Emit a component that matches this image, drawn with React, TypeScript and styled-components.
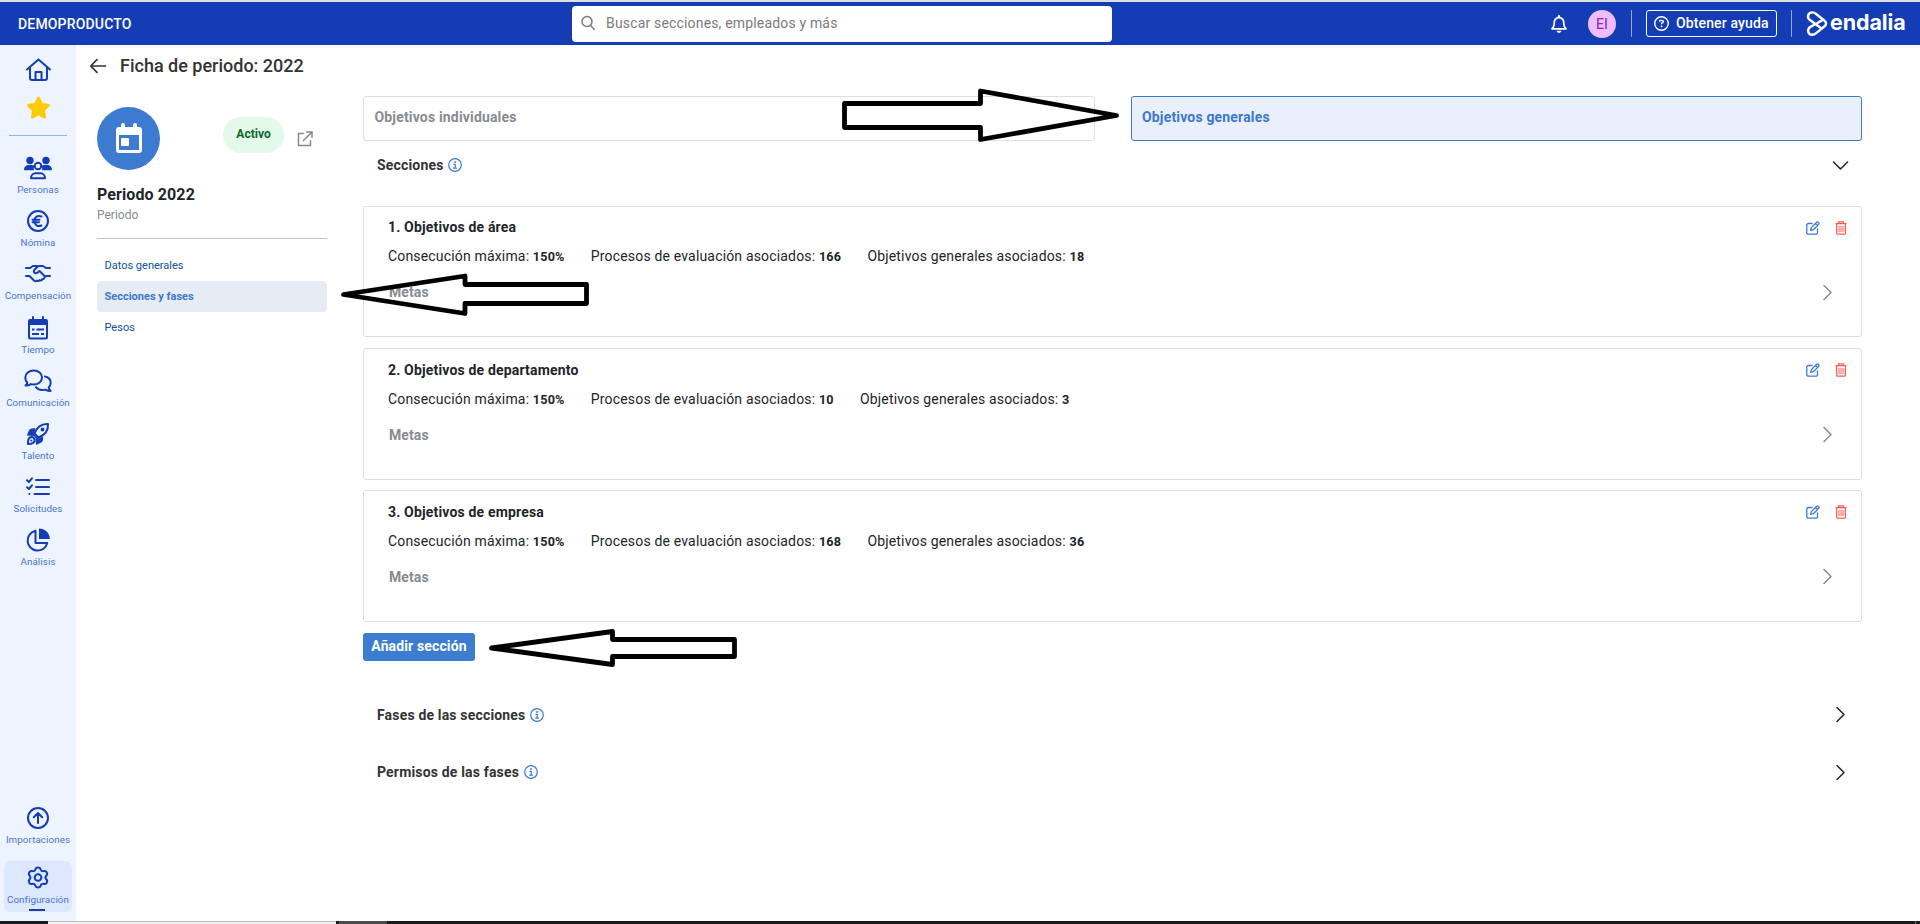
import React from 'react';
import styled, { createGlobalStyle, css } from 'styled-components';
import { FaStar, FaRegBell, FaRegCircleQuestion } from 'react-icons/fa6';

const Global = createGlobalStyle`
  * { box-sizing: border-box; }
  html, body { margin: 0; padding: 0; background: #fff; }
  body { font-family: Roboto, "Open Sans", sans-serif; color: #212529; overflow: hidden; letter-spacing: 0.17px; }
  svg { display: block; flex: none; overflow: visible; }
`;

const Screen = styled.div`
  position: relative;
  width: 1920px;
  height: 924px;
  display: flex;
  flex-direction: column;
  overflow: hidden;
`;

const Header = styled.header`
  height: 45px;
  flex: none;
  display: flex;
  align-items: center;
  background: #143db5;
  border-top: 2px solid #dfdfe3;
  color: #fff;
`;

const Company = styled.div`
  width: 572px;
  padding-left: 18px;
  font-size: 14px;
  font-weight: 500;
`;

const SearchBox = styled.label`
  width: 540px;
  height: 36px;
  margin-top: 1px;
  display: flex;
  align-items: center;
  gap: 11px;
  padding: 0 9px 2px;
  border-radius: 4px;
  background: #fff;
  color: #7b7b7b;
  font-size: 14px;
`;

const HeaderTools = styled.div`
  flex: 1;
  height: 100%;
  display: flex;
  justify-content: flex-end;
  align-items: center;
  padding-right: 12px;
`;

const Avatar = styled.div`
  width: 28px;
  height: 28px;
  margin: 1px 15px 0 20px;
  border-radius: 50%;
  background: #efbdfd;
  color: #8a25b0;
  font-size: 14px;
  display: flex;
  align-items: center;
  justify-content: center;
  padding-bottom: 1px;
`;

const HeaderRule = styled.div`
  width: 1px;
  height: 27px;
  background: #8fa7e3;
`;

const HelpButton = styled.button`
  width: 131px;
  height: 27px;
  margin: 0 14px;
  padding: 0 0 1px 7px;
  display: flex;
  align-items: center;
  gap: 7px;
  border: 1px solid #fff;
  border-radius: 3px;
  background: transparent;
  color: #fff;
  font: 500 14px Roboto, sans-serif;
  letter-spacing: 0.13px;
  white-space: nowrap;
`;

const Brand = styled.div`
  display: flex;
  align-items: center;
  gap: 3px;
  margin-left: 14px;
  width: 102px;
`;

const BrandName = styled.span`
  margin-top: -4px;
  font: 700 21.5px/26px Inter, sans-serif;
  letter-spacing: -0.1px;
`;

const Body = styled.div`
  flex: 1;
  min-height: 0;
  display: flex;
`;

const Rail = styled.nav`
  width: 76px;
  flex: none;
  background: #edf4ff;
  color: #143db5;
  display: flex;
  flex-direction: column;
  align-items: center;
  padding: 13px 0 9px;
`;

const StarSlot = styled.div`
  flex: none;
  margin-top: 13px;
  color: #ffcb05;
`;

const RailRule = styled.div`
  width: 58px;
  height: 1px;
  flex: none;
  margin: 15px 0 16px;
  background: #8db3f5;
`;

const RailItem = styled.a<{ $active?: boolean }>`
  position: relative;
  width: 68px;
  height: 53.2px;
  flex: none;
  display: flex;
  flex-direction: column;
  align-items: center;
  padding-top: 4px;
  gap: 3px;
  color: #143db5;
  ${({ $active }) => $active && css`
    height: 51px;
    padding-top: 5px;
    border-radius: 7px;
    background: #dce8fe;
    &::after {
      content: '';
      position: absolute;
      left: 25px;
      bottom: 1px;
      width: 16px;
      height: 2px;
      background: #143db5;
    }
  `}
`;

const RailLabel = styled.span`
  color: #4b74c9;
  font-size: 9.8px;
  line-height: 13px;
  letter-spacing: 0.08px;
  white-space: nowrap;
`;

const RailGap = styled.div`
  height: 6px;
  flex: none;
`;

const Spacer = styled.div`
  flex: 1;
`;

const Page = styled.main`
  flex: 1;
  display: flex;
  flex-direction: column;
  background: #fff;
`;

const TitleRow = styled.div`
  height: 51px;
  display: flex;
  align-items: flex-start;
  gap: 13px;
  padding: 12px 0 0 13px;
  color: #333;
`;

const Title = styled.h1`
  margin: -3px 0 0;
  font-size: 18px;
  line-height: 24px;
  font-weight: 500;
  letter-spacing: 0;
`;

const Columns = styled.div`
  display: flex;
`;

const Profile = styled.aside`
  width: 251px;
  padding: 11px 0 0 21px;
`;

const ProfileTop = styled.div`
  display: flex;
  align-items: flex-start;
`;

const PeriodBadge = styled.div`
  width: 63px;
  height: 63px;
  border-radius: 50%;
  background: #3c7bcf;
  color: #fff;
  display: flex;
  align-items: center;
  justify-content: center;
`;

const Status = styled.span`
  width: 61px;
  height: 36px;
  margin: 10px 13px 0 63px;
  padding-top: 10px;
  border-radius: 18px;
  background: #e3f9ea;
  color: #08692a;
  font-size: 12px;
  line-height: 15px;
  font-weight: 700;
  letter-spacing: 0;
  text-align: center;
`;

const OpenIcon = styled.span`
  margin-top: 24px;
  color: #858b90;
`;

const PeriodName = styled.h2`
  margin: 14px 0 0;
  font-size: 16px;
  line-height: 21px;
  font-weight: 700;
  letter-spacing: 0.1px;
`;

const PeriodKind = styled.div`
  margin-top: 3px;
  height: 31px;
  border-bottom: 1px solid #bdbfc1;
  color: #858b90;
  font-size: 12px;
  line-height: 14px;
  letter-spacing: 0;
`;

const SideMenu = styled.div`
  display: flex;
  flex-direction: column;
  padding-top: 11px;
`;

const SideLink = styled.a<{ $active?: boolean }>`
  height: 31px;
  padding: 0 7.500px 1px;
  display: flex;
  align-items: center;
  border-radius: 4px;
  font-size: 11px;
  letter-spacing: 0;
  font-weight: ${p => (p.$active ? 700 : 400)};
  color: ${p => (p.$active ? '#3f77cb' : '#10519b')};
  background: ${p => (p.$active ? '#e5ecf4' : 'transparent')};
`;

const Content = styled.section`
  width: 1499px;
  margin-left: 36px;
`;

const Tabs = styled.div`
  display: flex;
  gap: 36px;
`;

const Tab = styled.div<{ $active?: boolean }>`
  flex: 1;
  height: 45px;
  padding: 0 10.5px 3px;
  display: flex;
  align-items: center;
  border: 1px solid ${p => (p.$active ? '#3c78cb' : '#dedfe1')};
  border-radius: 3px;
  background: ${p => (p.$active ? '#e9f0fb' : '#fff')};
  color: ${p => (p.$active ? '#3c78cb' : '#858c91')};
  font-size: 14px;
  font-weight: 700;
`;

const Accordion = styled.div<{ $height: number }>`
  height: ${p => p.$height}px;
  display: flex;
  align-items: center;
  gap: 4.5px;
  padding: 0 13px 0 14px;
  color: #333;
  font-size: 14px;
  font-weight: 700;
  > :last-child { margin-left: auto; color: #222; }
`;

const InfoMark = styled.span`
  color: #3c7bcf;
`;

const Cards = styled.div`
  display: flex;
  flex-direction: column;
  gap: 10.8px;
  margin-top: 17px;
`;

const Card = styled.article`
  height: 131.4px;
  padding: 11.4px 20px 0 24px;
  border: 1px solid #dedfe1;
  border-radius: 3px;
`;

const CardHead = styled.div`
  display: flex;
  align-items: center;
  height: 18px;
`;

const CardTitle = styled.h3`
  flex: 1;
  margin: 0;
  font-size: 14px;
  font-weight: 700;
`;

const Actions = styled.div`
  display: flex;
  gap: 15px;
  padding-top: 1px;
  margin-right: -5.5px;
`;

const Edit = styled.span`
  color: #3c7bcf;
`;

const Remove = styled.span`
  color: #ff5a52;
`;

const Facts = styled.div`
  display: flex;
  gap: 26.2px;
  margin-top: 11px;
  font-size: 14px;
  line-height: 18px;
  b { font-size: 12.6px; letter-spacing: 0.2px; }
`;

const Goals = styled.div`
  display: flex;
  align-items: center;
  justify-content: space-between;
  margin-top: 13px;
  padding: 0 5px 0 1px;
  height: 26px;
  color: #858c91;
  font-size: 14px;
  font-weight: 700;
  letter-spacing: 0.1px;
`;

const AddButton = styled.button`
  display: block;
  width: 112px;
  height: 28px;
  margin: 11.2px 0 28px;
  padding: 0 0 2px;
  border: 0;
  border-radius: 3px;
  background: #3c7dd0;
  color: #fff;
  font: 700 14px Roboto, sans-serif;
  letter-spacing: 0.13px;
  white-space: nowrap;
`;

const DesktopEdge = styled.div`
  height: 3px;
  flex: none;
  display: flex;
  background: #191a1a;
`;

const EdgeField = styled.div`
  width: 288px;
  margin-left: 48px;
  background: #f3f3f2;
  border-top: 1px solid #bcbcb9;
`;

const EdgeTile = styled.div`
  width: 48px;
  margin-left: 3px;
  background: #4a4b4b;
`;

const EdgeTick = styled.div`
  width: 1px;
  margin: 0 4px 0 auto;
  background: #6a6b6b;
`;

const Pointers = styled.svg`
  position: absolute;
  left: 0;
  top: 0;
  pointer-events: none;
`;

const line = { fill: 'none', stroke: 'currentColor', strokeWidth: 2, strokeLinecap: 'round', strokeLinejoin: 'round' } as const;
const thin = { ...line, strokeWidth: 1.5 } as const;

const SearchIcon = () => (
  <svg width="14" height="16" viewBox="0 0 14 16" {...thin}>
    <circle cx="6" cy="6.500" r="5" /><path d="m9.700 10.500 3.600 4" />
  </svg>
);

const BackIcon = () => (
  <svg width="18" height="18" viewBox="0 0 18 18" {...thin} strokeWidth={1.7}>
    <path d="M16.500 9H2M8 2.700 1.700 9 8 15.300" />
  </svg>
);

const HomeIcon = () => (
  <svg width="25" height="24" viewBox="0 0 25 24" {...line}>
    <path d="M1 11.500 12.500 1.500 24 11.500M4 9.500V20a2 2 0 0 0 2 2h13a2 2 0 0 0 2-2V9.500M9.500 22v-8h6v8" />
  </svg>
);

const OpenOutIcon = () => (
  <svg width="16" height="16" viewBox="0 0 16 16" {...thin} strokeLinecap="square" strokeLinejoin="miter">
    <path d="M6 2.500H1.500v12h12V10M10 1h5v5M14.500 1.500 6.500 9.500" />
  </svg>
);

const InfoIcon = () => (
  <svg width="14" height="14" viewBox="0 0 14 14">
    <circle cx="7" cy="7" r="6.300" fill="none" stroke="currentColor" strokeWidth="1.200" />
    <rect x="6.200" y="3.200" width="1.700" height="1.600" fill="currentColor" />
    <path d="M5.500 6.300h1.700v3.900M5.200 10.200h3.700" fill="none" stroke="currentColor" strokeWidth="1.200" />
  </svg>
);

const EditIcon = () => (
  <svg width="14" height="14" viewBox="0 0 14 14" {...thin} strokeWidth={1.3}>
    <path d="M6 2.500H2.300A1.500 1.500 0 0 0 .8 4v7.700a1.500 1.500 0 0 0 1.500 1.500H10a1.500 1.500 0 0 0 1.500-1.500V8" />
    <path d="m4.700 9.300.6-2.700 5.300-5.300c.5-.5 1.200-.5 1.700 0l.4.4c.5.5.5 1.200 0 1.700L7.400 8.700ZM9.500 2.500l2 2" />
  </svg>
);

const TrashIcon = () => (
  <svg width="12" height="14" viewBox="0 0 12 14" fill="none" stroke="currentColor" strokeWidth="1.200">
    <path d="M.5 2.700h11M3.500 2.500V.9h5v1.600M1.600 3v9.300c0 .5.3.8.8.8h7.200c.5 0 .8-.3.8-.8V3" />
    <path d="M4 5v6M6 5v6M8 5v6" strokeWidth="1" />
  </svg>
);

const DownIcon = () => (
  <svg width="17" height="17" viewBox="0 0 17 17" {...thin}><path d="m1.500 5 7 7 7-7" /></svg>
);

const RightIcon = () => (
  <svg width="17" height="17" viewBox="0 0 17 17" {...thin}><path d="m5 1.500 7 7-7 7" /></svg>
);

const CalendarIcon = () => (
  <svg width="28" height="32" viewBox="0 0 28 32" fill="none">
    <path d="M8 2v4M20 2v4" stroke="currentColor" strokeWidth="4" strokeLinecap="round" />
    <path fillRule="evenodd" fill="currentColor" d="M4 4h20a3 3 0 0 1 3 3v20a3 3 0 0 1-3 3H4a3 3 0 0 1-3-3V7a3 3 0 0 1 3-3ZM4 12v15h20V12Z" />
    <rect x="6" y="15" width="8" height="8" rx="1" fill="currentColor" />
  </svg>
);

const PeopleIcon = () => (
  <svg width="28" height="24" viewBox="0 0 28 24">
    <g fill="currentColor">
      <circle cx="6" cy="4.500" r="3.700" /><circle cx="22" cy="4.500" r="3.700" />
      <path d="M0 14c0-3 2-5 5-5h3c1 0 1.700.3 2.300.8A6 6 0 0 0 10 14.300H1ZM28 14c0-3-2-5-5-5h-3c-1 0-1.700.3-2.300.8a6 6 0 0 1 .3 4.500h9Z" />
    </g>
    <g {...line}><circle cx="14" cy="10" r="3.300" /><path d="M7 22.300c0-3 2-5 4.500-5h5c2.500 0 4.500 2 4.500 5Z" /></g>
  </svg>
);

const EuroIcon = () => (
  <svg width="24" height="24" viewBox="0 0 24 24" {...line}>
    <circle cx="12" cy="12" r="10" />
    <path d="M15.500 7.500c-4-1.500-7 .5-7 4.500s3 6 7 4.500M6.500 10.800h7M6.500 13.300h6.500" />
  </svg>
);

const HandsIcon = () => (
  <svg width="26" height="24" viewBox="0 0 26 24" {...line}>
    <path d="M1 6h4l3-2h4M25 6h-4l-3-2h-3.500c-1 0-1.500.3-2.200 1L9.500 7.800c-1 1-.8 2.500.2 3.200 1 .6 2 .3 2.800-.4L14.500 9l5.500 5.500M1 14h3.500l4.500 4.500c1 1 2.200.8 2.800 0 1 1 2.200.7 2.700-.4 1.200.8 2.300.2 2.700-1 1.200.3 2-.4 2.300-1.300L20 14.500l2-.5h3" />
  </svg>
);

const AgendaIcon = () => (
  <svg width="22" height="24" viewBox="0 0 22 24">
    <path {...line} d="M2 8h18v13a1.500 1.500 0 0 1-1.500 1.500h-15A1.500 1.500 0 0 1 2 21ZM6 1v4M16 1v4" />
    <path fill="currentColor" d="M3 3h16a2 2 0 0 1 2 2v4H1V5a2 2 0 0 1 2-2Z" />
    <path {...line} strokeLinecap="butt" d="M5 13.500h2.500M9.500 13.500H17M5 18h7M14 18h3" />
  </svg>
);

const ChatIcon = () => (
  <svg width="28" height="24" viewBox="0 0 28 24" {...line}>
    <path d="M1.500 16.500c1.200-1 1.800-2 1.800-3A7.200 6.700 0 0 1 1.300 8.500C1.300 4.700 5 1.500 9.800 1.500S18 4.700 18 8.500s-3.700 7-8.300 7c-1 0-2-.1-2.800-.4-1.500 1-3.400 1.500-5.400 1.400Z" />
    <path d="M21 7.500c3.300.8 5.700 3.300 5.700 6.300 0 1.800-.7 3.300-2 4.500.2 1.300.8 2.400 1.900 3.700-2 0-3.800-.5-5.200-1.400-4 1-7.400 0-9.400-2.500" />
  </svg>
);

const RocketIcon = () => (
  <svg width="24" height="24" viewBox="0 0 24 24">
    <path {...line} d="M8.500 11.500C11 5 15 1.500 22 2c.5 7-3 11-9.500 13.500Z" />
    <path fill="currentColor" d="M9.500 6.500C6 6 4 6.500 3 8.500L.8 13.500 8 14l1.500 2 .5 7 5-2.200c2-1 2.500-3 2-6.300L12.500 16.500 7.800 12Z" />
    <circle cx="16.500" cy="7.500" r="1.900" fill="currentColor" />
    <path {...line} d="M2 22c-.3-3 .3-7 3.500-7s4 4 1.800 5.700C6 21.800 4 22 2 22Z" /><circle cx="5.300" cy="18.500" r="1.100" fill="currentColor" />
  </svg>
);

const ChecklistIcon = () => (
  <svg width="24" height="24" viewBox="0 0 24 24" {...line}>
    <path d="M1 5.300 2.800 7 6 3.300M1 12.300 2.800 14 6 10.300M10 5h13M10 12h13M8.500 19H23M3.300 19h.1" />
  </svg>
);

const PieIcon = () => (
  <svg width="24" height="24" viewBox="0 0 24 24">
    <path {...line} d="M9.500 2.800A10 10 0 1 0 21.300 15H9.500Z" />
    <path fill="currentColor" d="M13 .5V11h10.800C23.800 5 19 .5 13 .5Z" />
  </svg>
);

const ImportIcon = () => (
  <svg width="24" height="24" viewBox="0 0 24 24" {...line}>
    <circle cx="12" cy="12" r="10" /><path d="M12 17V7.500M7.800 11.200 12 7l4.200 4.200" />
  </svg>
);

const GearIcon = () => (
  <svg width="24" height="24" viewBox="0 0 24 24" {...line}>
    <path d="M9.300 3.500c.4-1.600 1-2 2.700-2s2.300.4 2.700 2c.4 1.400 1.500 2 2.900 1.600 1.600-.5 2.300-.2 3.100 1.200.9 1.500.8 2.200-.4 3.400-1 1-1 2.600 0 3.600 1.200 1.200 1.300 1.900.4 3.400-.8 1.400-1.500 1.700-3.100 1.200-1.400-.4-2.500.2-2.900 1.600-.4 1.600-1 2-2.700 2s-2.300-.4-2.700-2c-.4-1.400-1.500-2-2.900-1.600-1.600.5-2.300.2-3.100-1.200-.9-1.500-.8-2.200.4-3.400 1-1 1-2.600 0-3.600-1.200-1.200-1.300-1.900-.4-3.400.8-1.400 1.500-1.700 3.100-1.200 1.400.4 2.500-.2 2.900-1.600Z" />
    <circle cx="12" cy="11.500" r="3.300" />
  </svg>
);

const LogoMark = () => (
  <svg width="21" height="27" viewBox="0 0 21 27" fill="none" stroke="currentColor" strokeWidth="2.400" strokeLinejoin="round">
    <path d="M17.200 9.600 11 13.300 4.800 16.600C.4 19.300 1.800 24.700 6.300 24.700c1.400 0 2.500-.5 3.500-1.300l8.800-7.200c2-1.700 2-3.700 0-5.400L9.800 3.700C8.800 2.900 7.700 2.400 6.300 2.400 1.800 2.400.4 7.800 4.300 10.200L15.500 18.500" />
  </svg>
);

const modules = [
  ['Personas', PeopleIcon], ['Nómina', EuroIcon], ['Compensación', HandsIcon], ['Tiempo', AgendaIcon],
  ['Comunicación', ChatIcon], ['Talento', RocketIcon], ['Solicitudes', ChecklistIcon], ['Análisis', PieIcon],
] as const;

const sections = [
  { name: 'Objetivos de área', processes: 166, goals: 18 },
  { name: 'Objetivos de departamento', processes: 10, goals: 3 },
  { name: 'Objetivos de empresa', processes: 168, goals: 36 },
];

const Info = () => <InfoMark><InfoIcon /></InfoMark>;

export default function App() {
  return (
    <Screen>
      <Global />
      <Header>
        <Company>DEMOPRODUCTO</Company>
        <SearchBox><SearchIcon />Buscar secciones, empleados y más</SearchBox>
        <HeaderTools>
          <FaRegBell size={18} />
          <Avatar>EI</Avatar>
          <HeaderRule />
          <HelpButton><FaRegCircleQuestion size={15} />Obtener ayuda</HelpButton>
          <HeaderRule />
          <Brand><LogoMark /><BrandName>endalia</BrandName></Brand>
        </HeaderTools>
      </Header>
      <Body>
        <Rail>
          <HomeIcon />
          <StarSlot><FaStar size={25} /></StarSlot>
          <RailRule />
          {modules.map(([label, Icon]) => (
            <RailItem key={label}><Icon /><RailLabel>{label}</RailLabel></RailItem>
          ))}
          <Spacer />
          <RailItem><ImportIcon /><RailLabel>Importaciones</RailLabel></RailItem>
          <RailGap />
          <RailItem $active><GearIcon /><RailLabel>Configuración</RailLabel></RailItem>
        </Rail>
        <Page>
          <TitleRow><BackIcon /><Title>Ficha de periodo: 2022</Title></TitleRow>
          <Columns>
            <Profile>
              <ProfileTop>
                <PeriodBadge><CalendarIcon /></PeriodBadge>
                <Status>Activo</Status>
                <OpenIcon><OpenOutIcon /></OpenIcon>
              </ProfileTop>
              <PeriodName>Periodo 2022</PeriodName>
              <PeriodKind>Periodo</PeriodKind>
              <SideMenu>
                <SideLink>Datos generales</SideLink>
                <SideLink $active>Secciones y fases</SideLink>
                <SideLink>Pesos</SideLink>
              </SideMenu>
            </Profile>
            <Content>
              <Tabs><Tab>Objetivos individuales</Tab><Tab $active>Objetivos generales</Tab></Tabs>
              <Accordion $height={48}>Secciones <Info /><DownIcon /></Accordion>
              <Cards>
                {sections.map((s, i) => (
                  <Card key={s.name}>
                    <CardHead>
                      <CardTitle>{i + 1}. {s.name}</CardTitle>
                      <Actions><Edit><EditIcon /></Edit><Remove><TrashIcon /></Remove></Actions>
                    </CardHead>
                    <Facts>
                      <span>Consecución máxima: <b>150%</b></span>
                      <span>Procesos de evaluación asociados: <b>{s.processes}</b></span>
                      <span>Objetivos generales asociados: <b>{s.goals}</b></span>
                    </Facts>
                    <Goals>Metas<RightIcon /></Goals>
                  </Card>
                ))}
              </Cards>
              <AddButton>Añadir sección</AddButton>
              <Accordion $height={52}>Fases de las secciones <Info /><RightIcon /></Accordion>
              <Accordion $height={63}>Permisos de las fases <Info /><RightIcon /></Accordion>
            </Content>
          </Columns>
        </Page>
      </Body>
      <DesktopEdge><EdgeField /><EdgeTile /><EdgeTick /></DesktopEdge>
      <Pointers width="1920" height="924" fill="none" stroke="#000" strokeWidth="4.800" strokeLinejoin="round">
        <path d="M844.500 103.500H980.500V91L1116.500 115.500 980.500 139.500V127.500H844.500Z" />
        <path d="M343.500 294.500 465 276V284.500H586.500V303.500H465V313.500Z" />
        <path d="M491.500 648 612.500 631.500V639.500H734.500V656.500H612.500V664.500Z" />
      </Pointers>
    </Screen>
  );
}
